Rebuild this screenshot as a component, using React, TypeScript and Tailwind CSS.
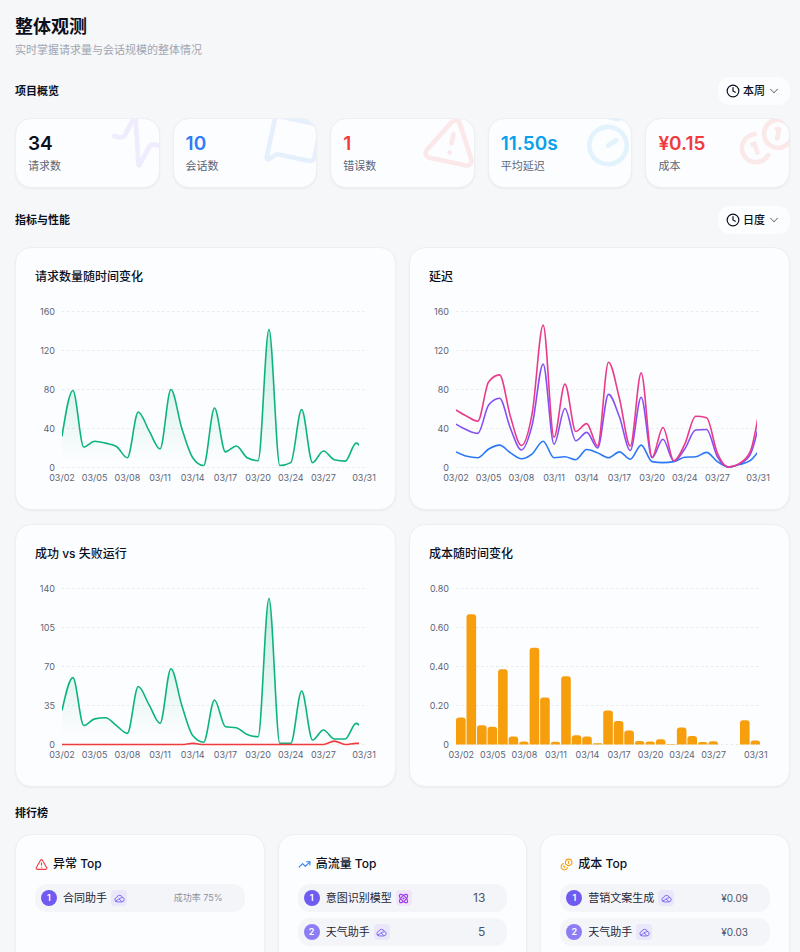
import React from 'react'
import { Activity, Atom, ChevronDown, Clock, MessageSquare, Timer, TrendingUp, TriangleAlert } from 'lucide-react'

function CoinsIcon({ className }: { className?: string }) {
    return (
        <svg viewBox='0 0 24 24' className={className} fill='none' stroke='currentColor' strokeWidth='2' strokeLinecap='round' strokeLinejoin='round'>
            <path d='M13.744 17.736a6 6 0 1 1-7.48-7.48' />
            <path d='M15 6h1v4' />
            <path d='m6.134 14.768.866-.5 2 3.464' />
            <circle cx='16' cy='8' r='6' />
        </svg>
    )
}

function CloudIcon() {
    return (
        <svg viewBox='0 0 24 24' className='size-[11px]' fill='none' stroke='currentColor' strokeWidth='2' strokeLinecap='round' strokeLinejoin='round'>
            <path d='M7 19.500a5 5 0 0 1-1-9.900a6.400 6.400 0 0 1 12.200 0a5 5 0 0 1-.7 9.900z' />
            <path d='M4 17.500C8 17 11 10.500 18 10' />
            <path d='M11.500 13.500l5 4.500' />
        </svg>
    )
}

const stats = [
    { label: '请求数', value: '34', icon: Activity, color: 'text-[#0a0f1e]', iconColor: 'text-[#7c5cfc]' },
    { label: '会话数', value: '10', icon: MessageSquare, color: 'text-[#2f7cf6]', iconColor: 'text-[#2f7cf6]' },
    { label: '错误数', value: '1', icon: TriangleAlert, color: 'text-[#f03a3e]', iconColor: 'text-[#f03a3e]' },
    { label: '平均延迟', value: '11.50s', icon: Timer, color: 'text-[#0aa0ec]', iconColor: 'text-[#0aa0ec]' },
    { label: '成本', value: '¥0.15', icon: CoinsIcon, color: 'text-[#f03a3e]', iconColor: 'text-[#f03a3e]' },
]

const requests = [32, 79, 21, 27, 25, 21.5, 10, 57, 37.5, 19, 80, 40, 10, 2, 61, 16, 22, 10, 7, 141.5, 2, 5, 59.5, 5, 17, 8, 6.5, 25, 7]
const success = [30.5, 60, 17, 23, 24, 17, 10, 52, 35.5, 19, 68, 35, 8, 2, 40, 16, 15, 9, 7, 131, 1, 1, 48, 4, 13, 5, 5, 19, 6]
const failed = [0, 0, 0, 0, 0, 0, 0, 0, 0, 0, 0, 0, 1, 0, 0, 0, 0, 0, 0, 0, 0, 0, 0, 0, 0, 3, 0, 1, 1]
const p99 = [59, 52.5, 47.5, 88, 95, 52, 22.5, 56, 146, 31, 85.5, 37, 45, 22, 108, 71, 22, 97, 10.5, 41, 7, 24, 52.5, 51, 14.5, 0.5, 4, 16, 70]
const p95 = [44.5, 38.5, 35, 64, 71, 40, 18, 44, 106, 24, 60.5, 27.5, 36, 20, 75, 52, 17.5, 72, 10, 29, 6.5, 19, 38.5, 39, 11, 0.5, 3.5, 13, 54]
const p50 = [16, 11.5, 10, 19, 23, 15, 9, 14, 27, 10, 11, 8, 18.5, 15, 10, 16, 8.5, 23, 6, 5, 6, 10.5, 11, 15.5, 6, 0.5, 3, 7, 20]
const cost = [0.138, 0.668, 0.099, 0.091, 0.386, 0.041, 0.015, 0.496, 0.241, 0.014, 0.35, 0.048, 0.041, 0.007, 0.174, 0.121, 0.072, 0.018, 0.015, 0.027, 0.003, 0.087, 0.043, 0.013, 0.017, 0, 0, 0.125, 0.02]

const dates = [
    { i: 0, text: '03/02' }, { i: 3, text: '03/05' }, { i: 6, text: '03/08' }, { i: 9, text: '03/11' },
    { i: 12, text: '03/14' }, { i: 15, text: '03/17' }, { i: 18, text: '03/20' }, { i: 21, text: '03/24' },
    { i: 24, text: '03/27' }, { i: 28, text: '03/31' },
]

// plot box inside the 341x193 chart
const LEFT = 27
const RIGHT = 332
const TOP = 14.5
const BOTTOM = 170.5
const STEP = (RIGHT - LEFT) / 28
const SLOT = (RIGHT - LEFT) / 29

// monotone cubic through all the points
function curve(values: number[], max: number) {
    const pts = values.map((v, i) => [LEFT + i * STEP, BOTTOM - (v / max) * (BOTTOM - TOP)])
    const n = pts.length
    const s = pts.slice(1).map((p, i) => (p[1] - pts[i][1]) / STEP)
    const m: number[] = pts.map((_, i) => {
        if (i === 0 || i === n - 1) return 0
        const a = s[i - 1]
        const b = s[i]
        return (Math.sign(a) + Math.sign(b)) * Math.min(Math.abs(a), Math.abs(b), 0.5 * Math.abs((a + b) / 2)) || 0
    })
    m[0] = (3 * s[0] - m[1]) / 2
    m[n - 1] = (3 * s[n - 2] - m[n - 2]) / 2
    let d = `M${pts[0][0]},${pts[0][1]}`
    for (let i = 0; i < n - 1; i++) {
        const [x0, y0] = pts[i]
        const [x1, y1] = pts[i + 1]
        d += `C${x0 + STEP / 3},${y0 + (m[i] * STEP) / 3} ${x1 - STEP / 3},${y1 - (m[i + 1] * STEP) / 3} ${x1},${y1}`
    }
    return d
}

type Line = { values: number[]; color: string; fill?: boolean }

function Chart({ id, title, ticks, max, lines = [], bars, end = 324 }: {
    id: string; title: string; ticks: string[]; max: number; lines?: Line[]; bars?: number[]; end?: number
}) {
    return (
        <article className='rounded-2xl border border-[#eeeff2] bg-[#fcfdfe] p-[19px] shadow-xs'>
            <h3 className='text-[12px] leading-5 font-medium'>{title}</h3>
            <svg viewBox='0 0 341 193' className='mt-[10px] block w-full overflow-visible' role='img' aria-label={title}>
                <defs>
                    <linearGradient id={`${id}-fill`} x1='0' y1='0' x2='0' y2='1'>
                        <stop offset='5%' stopColor='#0cb47c' stopOpacity='0.22' />
                        <stop offset='95%' stopColor='#0cb47c' stopOpacity='0' />
                    </linearGradient>
                    <clipPath id={`${id}-clip`}>
                        <rect x={LEFT} y='0' width={end - LEFT} height='193' />
                    </clipPath>
                </defs>
                {ticks.map((t, i) => {
                    const y = TOP + i * 39
                    return (
                        <g key={t}>
                            <line x1={LEFT} x2={RIGHT} y1={y} y2={y} stroke='#e8eaee' strokeDasharray='2.5 2.5' />
                            <text x='20' y={y + 3} textAnchor='end' className='fill-[#5d6577] text-[9px]'>{t}</text>
                        </g>
                    )
                })}
                <g clipPath={`url(#${id}-clip)`} fill='none'>
                    {lines.map((l) => (
                        <React.Fragment key={l.color}>
                            {l.fill && <path d={`${curve(l.values, max)}V${BOTTOM}H${LEFT}Z`} fill={`url(#${id}-fill)`} />}
                            <path d={curve(l.values, max)} stroke={l.color} strokeWidth='1.6' />
                        </React.Fragment>
                    ))}
                </g>
                {bars?.map((v, i) => {
                    const h = (v / max) * (BOTTOM - TOP)
                    const r = Math.min(3, h)
                    const x = LEFT + i * SLOT
                    const w = SLOT - 0.9
                    return v > 0 && (
                        <path key={i} fill='#f69e0c'
                            d={`M${x},${BOTTOM}v${r - h}q0,${-r} ${r},${-r}h${w - 2 * r}q${r},0 ${r},${r}v${h - r}z`} />
                    )
                })}
                {dates.map(({ i, text }) => (
                    <text key={text} x={bars ? LEFT + (i + 0.5) * SLOT : Math.min(LEFT + i * STEP, 329)} y='184'
                        textAnchor='middle' className='fill-[#5d6577] text-[9px]'>{text}</text>
                ))}
            </svg>
        </article>
    )
}

function Picker({ label, options }: { label: string; options: string[] }) {
    return (
        <label className='flex h-7 items-center rounded-xl bg-[#fcfdfe] pr-[9px] pl-2'>
            <Clock className='mr-[3px] size-[14px]' />
            <select aria-label={label} className='w-6 appearance-none bg-transparent text-[11px] font-medium outline-none'>
                {options.map((o) => <option key={o}>{o}</option>)}
            </select>
            <ChevronDown strokeWidth={1.75} className='size-[14px] text-[#6b7280]' />
        </label>
    )
}

type Row = { name: string; value: string; kind: 'cloud' | 'atom' }

function Ranking({ title, icon, rows, valueClass }: { title: string; icon: React.ReactNode; rows: Row[]; valueClass: string }) {
    return (
        <article className='min-h-[240px] rounded-2xl border border-[#eeeff2] bg-[#fcfdfe] p-[19px] shadow-xs'>
            <h3 className='flex items-center gap-[5px] text-[12px] leading-5 font-medium'>{icon}{title}</h3>
            <ol className='mt-[10px] flex flex-col gap-[6px]'>
                {rows.map((row, i) => (
                    <li key={row.name} className='flex h-7 items-center rounded-xl bg-[#f4f5f9] pr-[22px] pl-[6px]'>
                        <span className={`flex size-4 items-center justify-center rounded-full text-[9px] font-semibold text-white ${i === 0 ? 'bg-[#6f5bf0]' : 'bg-[#8d7df4]'}`}>{i + 1}</span>
                        <span className='ml-[6px] text-[11px] text-[#1f2637]'>{row.name}</span>
                        <span className={`ml-1 flex size-4 items-center justify-center rounded ${row.kind === 'cloud' ? 'bg-[#e9e7f9] text-[#7460f2]' : 'bg-[#f0e5fb] text-[#a23cf0]'}`}>
                            {row.kind === 'cloud' ? <CloudIcon /> : <Atom strokeWidth={2.5} className='size-[11px]' />}
                        </span>
                        <span className={`ml-auto ${valueClass}`}>{row.value}</span>
                    </li>
                ))}
            </ol>
        </article>
    )
}

function App() {
    return (
        <main className="h-screen overflow-y-auto bg-[#f6f7f9] pt-[15px] pr-[10px] pb-4 pl-[15px] font-['Inter','Noto_Sans_CJK_SC',sans-serif] text-[#0a0f1e] [scrollbar-width:none]">
            <h1 className='text-[18px] leading-6 font-semibold'>整体观测</h1>
            <p className='mt-[3px] text-[11px] leading-4 text-[#a0a6b2]'>实时掌握请求量与会话规模的整体情况</p>

            <section className='mt-[19px]'>
                <div className='flex items-center justify-between'>
                    <h2 className='text-[11px] font-semibold'>项目概览</h2>
                    <Picker label='时间范围' options={['本周', '本月']} />
                </div>
                <div className='mt-[13px] grid grid-cols-5 gap-[13px]'>
                    {stats.map(({ label, value, icon: Icon, color, iconColor }) => (
                        <div key={label} className='relative h-[70px] overflow-hidden rounded-2xl border border-[#eeeff2] bg-[#fcfdfe] px-3 pt-[13px] shadow-xs'>
                            <Icon className={`absolute -top-[6px] -right-[6px] size-14 rotate-12 opacity-10 ${iconColor}`} />
                            <p className={`text-[19px] leading-6 font-semibold ${color}`}>{value}</p>
                            <p className='mt-[2px] text-[11px] leading-4 text-[#5d6577]'>{label}</p>
                        </div>
                    ))}
                </div>
            </section>

            <section className='mt-[18px]'>
                <div className='flex items-center justify-between'>
                    <h2 className='text-[11px] font-semibold'>指标与性能</h2>
                    <Picker label='统计粒度' options={['日度', '周度']} />
                </div>
                <div className='mt-[13px] grid grid-cols-2 gap-x-[13px] gap-y-[14px]'>
                    <Chart id='requests' title='请求数量随时间变化' ticks={['160', '120', '80', '40', '0']} max={160}
                        lines={[{ values: requests, color: '#0cb47c', fill: true }]} />
                    <Chart id='latency' title='延迟' ticks={['160', '120', '80', '40', '0']} max={160} end={328}
                        lines={[{ values: p50, color: '#2b78f6' }, { values: p95, color: '#8350f4' }, { values: p99, color: '#ea3a8c' }]} />
                    <Chart id='runs' title='成功 vs 失败运行' ticks={['140', '105', '70', '35', '0']} max={140}
                        lines={[{ values: success, color: '#0cb47c', fill: true }, { values: failed, color: '#f03a3e' }]} />
                    <Chart id='cost' title='成本随时间变化' ticks={['0.80', '0.60', '0.40', '0.20', '0']} max={0.8} bars={cost} />
                </div>
            </section>

            <section className='mt-[19px]'>
                <h2 className='text-[11px] leading-[15px] font-semibold'>排行榜</h2>
                <div className='mt-[13px] grid grid-cols-3 gap-[13px]'>
                    <Ranking title='异常 Top' icon={<TriangleAlert className='size-[13px] text-[#f03a3e]' />} valueClass='text-[9px] text-[#8b92a1]'
                        rows={[{ name: '合同助手', value: '成功率 75%', kind: 'cloud' }]} />
                    <Ranking title='高流量 Top' icon={<TrendingUp className='size-[13px] text-[#2f7cf6]' />} valueClass='text-[12px] text-[#4b5468]'
                        rows={[{ name: '意图识别模型', value: '13', kind: 'atom' }, { name: '天气助手', value: '5', kind: 'cloud' }]} />
                    <Ranking title='成本 Top' icon={<CoinsIcon className='size-[13px] text-[#f69e0c]' />} valueClass='text-[10px] text-[#4b5468]'
                        rows={[{ name: '营销文案生成', value: '¥0.09', kind: 'cloud' }, { name: '天气助手', value: '¥0.03', kind: 'cloud' }]} />
                </div>
            </section>
        </main>
    )
}

export default App
